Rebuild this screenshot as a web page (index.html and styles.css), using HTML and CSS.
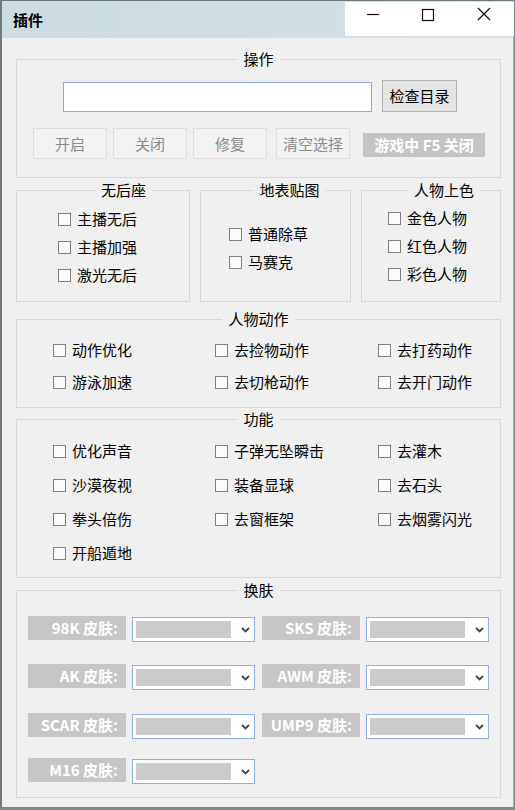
FILE: index.html
```html
<!DOCTYPE html>
<html lang="zh-CN">
<head>
  <meta charset="UTF-8">
  <title>插件</title>
  <link rel="stylesheet" href="styles.css">
</head>
<body>

<div class="window">
  <div class="titlebar">
    <span class="title">插件</span>
    <div class="controls">
      <svg width="169" height="34" viewBox="0 0 169 34">
        <line x1="22" y1="12.5" x2="34" y2="12.5" stroke="#111" stroke-width="1.2"/>
        <rect x="77.5" y="7.5" width="11" height="11" fill="none" stroke="#111" stroke-width="1.2"/>
        <path d="M133 6 L145 18 M145 6 L133 18" stroke="#111" stroke-width="1.3"/>
      </svg>
    </div>
  </div>

  <div class="content">
    <fieldset class="group ops">
      <legend>操作</legend>
      <div class="row-top">
        <input class="path" type="text">
        <button class="btn">检查目录</button>
      </div>
      <div class="row-btns">
        <button class="btn off">开启</button>
        <button class="btn off">关闭</button>
        <button class="btn off">修复</button>
        <button class="btn off wide">清空选择</button>
        <span class="game-tag">游戏中 F5 关闭</span>
      </div>
    </fieldset>

    <div class="trio">
      <fieldset class="group g-recoil">
        <legend>无后座</legend>
        <label class="chk"><span class="box"></span>主播无后</label>
        <label class="chk"><span class="box"></span>主播加强</label>
        <label class="chk"><span class="box"></span>激光无后</label>
      </fieldset>
      <fieldset class="group g-ground">
        <legend>地表贴图</legend>
        <label class="chk"><span class="box"></span>普通除草</label>
        <label class="chk"><span class="box"></span>马赛克</label>
      </fieldset>
      <fieldset class="group g-color">
        <legend>人物上色</legend>
        <label class="chk"><span class="box"></span>金色人物</label>
        <label class="chk"><span class="box"></span>红色人物</label>
        <label class="chk"><span class="box"></span>彩色人物</label>
      </fieldset>
    </div>

    <fieldset class="group g-action">
      <legend>人物动作</legend>
      <div class="grid3">
        <label class="chk"><span class="box"></span>动作优化</label>
        <label class="chk"><span class="box"></span>去捡物动作</label>
        <label class="chk"><span class="box"></span>去打药动作</label>
        <label class="chk"><span class="box"></span>游泳加速</label>
        <label class="chk"><span class="box"></span>去切枪动作</label>
        <label class="chk"><span class="box"></span>去开门动作</label>
      </div>
    </fieldset>

    <fieldset class="group g-func">
      <legend>功能</legend>
      <div class="grid3">
        <label class="chk"><span class="box"></span>优化声音</label>
        <label class="chk"><span class="box"></span>子弹无坠瞬击</label>
        <label class="chk"><span class="box"></span>去灌木</label>
        <label class="chk"><span class="box"></span>沙漠夜视</label>
        <label class="chk"><span class="box"></span>装备显球</label>
        <label class="chk"><span class="box"></span>去石头</label>
        <label class="chk"><span class="box"></span>拳头倍伤</label>
        <label class="chk"><span class="box"></span>去窗框架</label>
        <label class="chk"><span class="box"></span>去烟雾闪光</label>
        <label class="chk"><span class="box"></span>开船遁地</label>
      </div>
    </fieldset>

    <fieldset class="group g-skin">
      <legend>换肤</legend>
      <div class="skins">
        <div class="skin"><span class="skin-label">98K 皮肤:</span><span class="combo"><span class="combo-fill"></span><svg class="chev" width="9" height="6" viewBox="0 0 9 6"><polyline points="1,1 4.5,4.5 8,1" fill="none" stroke="#444" stroke-width="1.8"/></svg></span></div>
        <div class="skin"><span class="skin-label">SKS 皮肤:</span><span class="combo"><span class="combo-fill"></span><svg class="chev" width="9" height="6" viewBox="0 0 9 6"><polyline points="1,1 4.5,4.5 8,1" fill="none" stroke="#444" stroke-width="1.8"/></svg></span></div>
        <div class="skin"><span class="skin-label">AK 皮肤:</span><span class="combo"><span class="combo-fill"></span><svg class="chev" width="9" height="6" viewBox="0 0 9 6"><polyline points="1,1 4.5,4.5 8,1" fill="none" stroke="#444" stroke-width="1.8"/></svg></span></div>
        <div class="skin"><span class="skin-label">AWM 皮肤:</span><span class="combo"><span class="combo-fill"></span><svg class="chev" width="9" height="6" viewBox="0 0 9 6"><polyline points="1,1 4.5,4.5 8,1" fill="none" stroke="#444" stroke-width="1.8"/></svg></span></div>
        <div class="skin"><span class="skin-label">SCAR 皮肤:</span><span class="combo"><span class="combo-fill"></span><svg class="chev" width="9" height="6" viewBox="0 0 9 6"><polyline points="1,1 4.5,4.5 8,1" fill="none" stroke="#444" stroke-width="1.8"/></svg></span></div>
        <div class="skin"><span class="skin-label">UMP9 皮肤:</span><span class="combo"><span class="combo-fill"></span><svg class="chev" width="9" height="6" viewBox="0 0 9 6"><polyline points="1,1 4.5,4.5 8,1" fill="none" stroke="#444" stroke-width="1.8"/></svg></span></div>
        <div class="skin"><span class="skin-label">M16 皮肤:</span><span class="combo"><span class="combo-fill"></span><svg class="chev" width="9" height="6" viewBox="0 0 9 6"><polyline points="1,1 4.5,4.5 8,1" fill="none" stroke="#444" stroke-width="1.8"/></svg></span></div>
      </div>
    </fieldset>
  </div>
</div>

</body>
</html>
```

FILE: styles.css
```css
* {
  box-sizing: border-box;
}
body {
  margin: 0;
  width: 515px;
  height: 810px;
  overflow: hidden;
  background: #7d8a86;
  font-family: "Noto Sans CJK SC", "Noto Sans", sans-serif;
  font-size: 15px;
  color: #000;
}
.window {
  height: 807px;
  width: 514px;
  background: #f0f0f0;
  border-left: 2px solid #6e7b79;
  border-right: 1px solid #a9b0b0;
  display: flex;
  flex-direction: column;
}
.titlebar {
  height: 38px;
  flex: none;
  background: linear-gradient(to right, #cbdce2, #d3e1e5);
  border-top: 1px solid #6b7a7c;
  display: flex;
  justify-content: space-between;
  align-items: flex-start;
}
.title {
  font-weight: bold;
  font-size: 15px;
  line-height: 20px;
  margin: 9px 0 0 11px;
}
.controls {
  background: #fff;
  width: 169px;
  height: 34px;
  margin-top: 1px;
  margin-right: -1px;
}
.controls svg {
  display: block;
}
.content {
  padding-left: 14px;
}

/* group boxes */
.group {
  margin: 0;
  padding: 0;
  border: 1px solid #d7d7d7;
  min-width: 0;
}
.group legend {
  margin: 0 auto;
  padding: 0 6px;
  line-height: 20px;
  height: 20px;
}
.ops {
  width: 485px;
  margin-top: 11px;
  padding: 11px 0 18px;
}
.row-top {
  display: flex;
  align-items: flex-end;
  padding-left: 46px;
  height: 32px;
}
.path {
  width: 309px;
  height: 30px;
  margin: 0;
  border: 1px solid #86ade0;
  background: #fff;
  outline: none;
}
.btn {
  font-family: inherit;
  font-size: 15px;
  line-height: 20px;
  height: 32px;
  width: 75px;
  margin: 0 0 0 10px;
  padding: 0;
  background: #e4e4e4;
  border: 1px solid #b3b3b3;
  color: #000;
}
.row-btns {
  display: flex;
  align-items: center;
  margin-top: 16px;
  padding-left: 16px;
  height: 31px;
}
.btn.off {
  width: 74px;
  height: 31px;
  margin: 0 6px 0 0;
  background: #f3f3f3;
  border: 1px solid #dedede;
  color: #8a8a8a;
}
.btn.off.wide {
  margin-left: 3px;
}
.game-tag {
  margin-left: 7px;
  width: 122px;
  height: 24px;
  line-height: 24px;
  margin-top: 3px;
  background: #c4c4c4;
  color: #fff;
  font-weight: bold;
  text-align: center;
}

/* checkboxes */
.chk {
  display: flex;
  align-items: center;
  height: 28px;
  line-height: 20px;
  white-space: nowrap;
}
.box {
  width: 13px;
  height: 13px;
  border: 1px solid #7f7f7f;
  background: #fbfbfb;
  margin-right: 6px;
  flex: none;
}

.trio {
  display: flex;
  gap: 10px;
  margin-top: 2px;
}
.g-recoil {
  width: 174px;
  padding: 5px 0 12px 41px;
}
.g-ground {
  width: 151px;
  padding: 20px 0 0 28px;
}
.g-color {
  width: 140px;
  padding: 4px 0 0 26px;
}

.grid3 {
  display: grid;
  grid-template-columns: 162px 163px 1fr;
  padding-left: 36px;
}
.g-action {
  width: 485px;
  margin-top: 7px;
  padding: 5px 0 9px;
}
.g-action .chk {
  height: 32px;
}
.g-func {
  width: 485px;
  margin-top: 1px;
  padding: 5px 0 7px;
}
.g-func .chk {
  height: 34px;
}

/* skins */
.g-skin {
  width: 485px;
  margin-top: 2px;
  padding: 16px 0 15px;
}
.skins {
  display: grid;
  grid-template-columns: 234px 1fr;
  grid-template-rows: 48px 49px 45px 24px;
  padding-left: 11px;
}
.skin {
  display: flex;
  align-items: flex-start;
}
.skin-label {
  width: 98px;
  height: 24px;
  line-height: 24px;
  background: #c6c6c6;
  color: #fff;
  font-weight: bold;
  text-align: right;
  padding-right: 8px;
}
.combo {
  width: 123px;
  height: 25px;
  margin-left: 6px;
  margin-top: 1px;
  border: 1px solid #8ab2e2;
  background: #fff;
  display: flex;
  align-items: center;
  padding-left: 3px;
}
.combo-fill {
  width: 95px;
  height: 17px;
  background: #cbcbcb;
}
.chev {
  margin-left: 10px;
}
```
